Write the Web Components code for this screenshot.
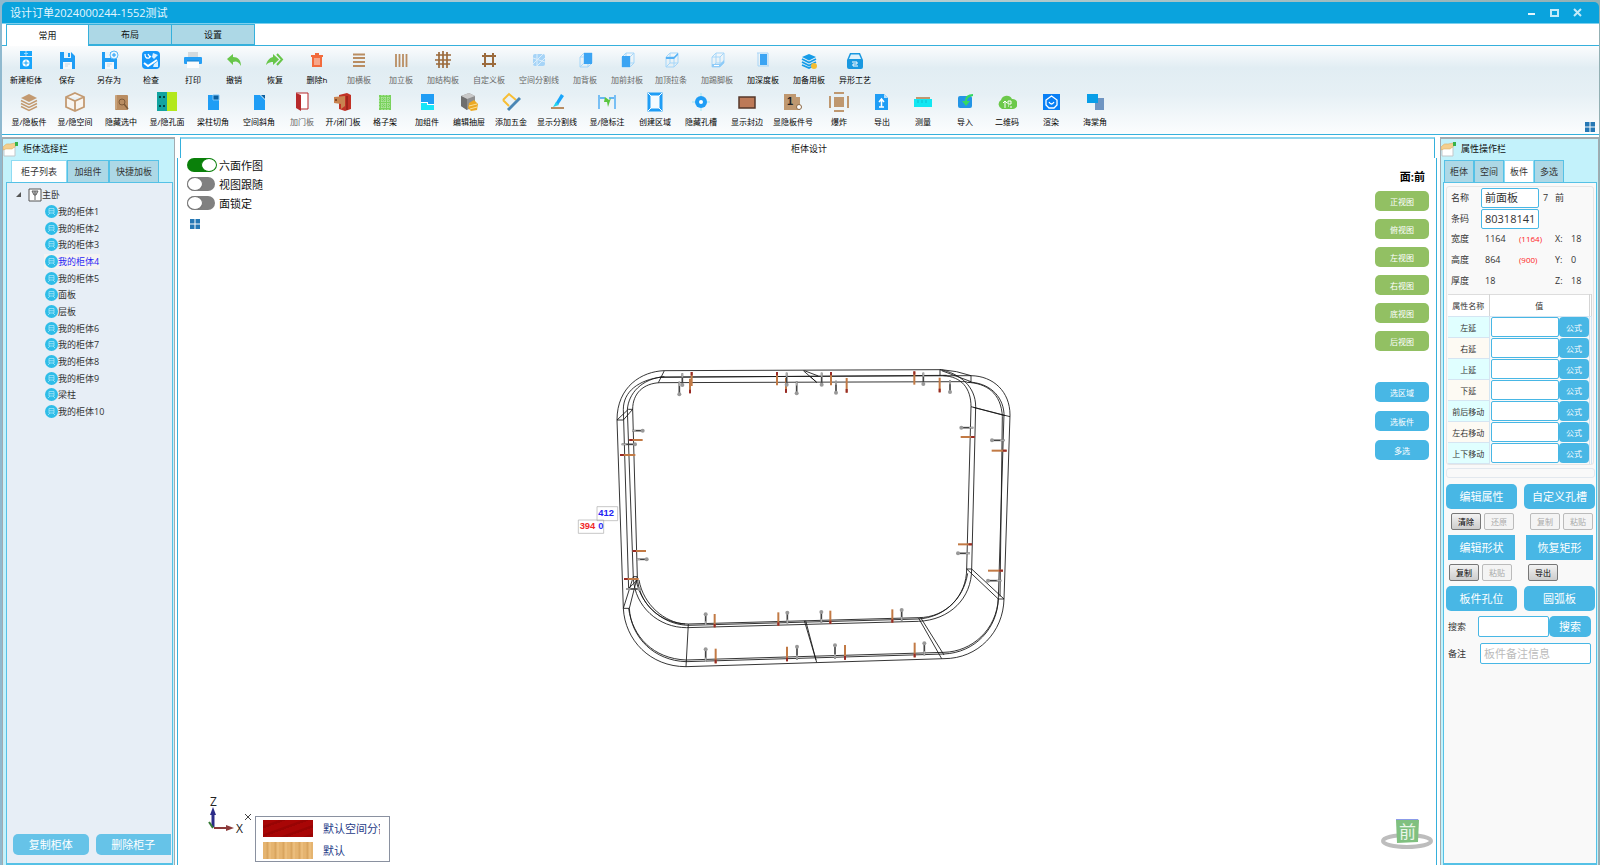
<!DOCTYPE html>
<html lang="zh-CN">
<head>
<meta charset="utf-8">
<title>设计订单2024000244-1552测试</title>
<style>
  html, body { margin: 0; height: 100%; }
  body { background: linear-gradient(90deg, #8fb9cf, #b9d3d6 50%, #93b0b4); font-family: "Open Sans", "Noto Sans CJK SC", sans-serif; font-size: 9px; color: #111; --line: #35b0dc; --btn: #48b7e5; }
</style>
</head>
<body>
<design-window></design-window>
<script>
const BASE = `*{box-sizing:border-box}button,input{font:inherit;color:inherit;margin:0}button{cursor:pointer;padding:0;border:0;background:none}svg{display:block}`;
const define = (name, css, html) => customElements.define(name, class extends HTMLElement {
  connectedCallback() {
    if (this.shadowRoot) return;
    const root = this.attachShadow({ mode: 'open' });
    root.innerHTML = `<style>${BASE}${css}</style>` + (typeof html === 'function' ? html(this) : html);
  }
});

const B = '#1f9df5', W = '#b98d62', box = '<path d="M5 7L9 3H17V13L13 17M5 7H13V17H5ZM13 7L17 3M9 3V13H17M9 13L5 17" fill="none" stroke="#a5d6f9"/>';
const ICONS = {
  cabinet: `<path d="M4 1H16V6H4ZM4 7H16V19H4Z" fill="#18a5fb"/><path d="M10 1V6M8 3.500H12" stroke="#9bdcff"/><circle cx="10" cy="13" r="3.500" fill="#fff"/><path d="M7.500 13H12.500M10 10.500V15.500" stroke="#18a5fb"/>`,
  save: `<path d="M3 2H14L18 6V19H3Z" fill="${B}"/><path d="M7 2H14V8H7Z" fill="#e8f4fb"/><path d="M11 3H13V7H11Z" fill="${B}"/><path d="M6 12H15V19H6Z" fill="#f3f8fc"/><path d="M8 14H13M8 16H11" stroke="#c8d8e4"/>`,
  saveas: `<path d="M3 2H14L18 6V19H3Z" fill="${B}"/><path d="M6 2H11V8H6Z" fill="#e8f4fb"/><path d="M6 12H15V19H6Z" fill="#f3f8fc"/><path d="M8 14H13M8 16H11" stroke="#c8d8e4"/><circle cx="15" cy="5" r="4" fill="#e9f6ff" stroke="#5bb8f7"/><path d="M13 5H17M15 3V7" stroke="${B}"/>`,
  check: `<rect x="1" y="1" width="18" height="18" rx="4" fill="#1697fa"/><path d="M4 4Q4 9 8 8L10 6M7 4L9 7" fill="none" stroke="#fff" stroke-width="1.300"/><path d="M3 13L7 16L16 10" fill="none" stroke="#fff" stroke-width="2"/><path d="M12 3L17 5L13 9L11 7ZM13 14L17 11V17H12Z" fill="#d9efff"/>`,
  print: `<path d="M5 2H15V7H5Z" fill="#d4dade"/><rect x="1" y="7" width="18" height="7" rx="1" fill="#269ff5"/><path d="M4 11H16V18H4Z" fill="#fafcfd"/><path d="M4 11H16" stroke="#137ec9"/>`,
  undo: `<path d="M3 9L9 4V7C14 7 17 10 17 16C14 11 12 11 9 12V15Z" fill="#68c64a"/>`,
  redo: `<path d="M14 9.500L8 4V7C4 8 2 11 1 15C4 12 6 12 8 12V15Z" fill="#68c64a"/><path d="M12 4L17 9.500L12 15" fill="none" stroke="#68c64a" stroke-width="2"/>`,
  trash: `<path d="M5 6H15V17H5ZM8 3H12V5H16V7H4V5H8Z" fill="#f26b3d"/><path d="M8 8V15M10 8V15M12 8V15" stroke="#fbe3da"/>`,
  hbars: `<path d="M4 4.500H16M4 8H16M4 12H16M4 16H16" stroke="${W}" stroke-width="1.800"/>`,
  vbars: `<path d="M5 4V17M8.500 4V17M12 4V17M15.500 4V17" stroke="${W}" stroke-width="1.800"/>`,
  fence: `<path d="M3 5H18M2 10H18M3 14H17M6 2V18M10 1V18M14 2V18" stroke="#9b6a3c" stroke-width="1.700" fill="none"/>`,
  hash: `<path d="M3 6H17M3 14H17M6 3V17M14 3V17" stroke="#9b6a3c" stroke-width="2"/>`,
  split: `<rect x="4" y="4" width="12" height="12" rx="2" fill="#a6d4f7"/><path d="M4 14L14 4M8 16L16 8M4 8L16 12M8 4V16" stroke="#dceefb"/>`,
  back: box + '<path d="M9 3H17V14H9Z" fill="#3ba4f3"/>',
  front: box + '<path d="M5 6H13V17H5Z" fill="#3ba4f3"/>',
  top: box + '<path d="M5 7H13L17 3V5L13 9H5Z" fill="#57b2f5"/>',
  kick: box + '<path d="M5 14H13L17 10V13L13 17H5Z" fill="#8fcbf7"/><path d="M7 15H12V16H7Z" fill="#fff"/>',
  depth: `<path d="M4 3H15M5 16H16M5 3V16M15 3V16" stroke="#a9d5f6"/><path d="M7 4H14V15H7Z" fill="#3ba4f3"/>`,
  spare: `<path d="M10 4L17 7L10 10.500L3 7Z" fill="#159ce8"/><path d="M3 9L10 12.500L17 9M3 12L10 15.500L17 12M3 15L10 18L16 15" fill="none" stroke="#159ce8" stroke-width="1.800"/><circle cx="15" cy="16" r="3" fill="#f4bd32"/>`,
  craft: `<path d="M2 10L5 3H15L18 10V17Q18 19 16 19H4Q2 19 2 17Z" fill="#1998e0"/><path d="M4 9L6 4.500H14L16 9Z" fill="#dff1fb"/><path d="M7 12H12V14H8V16H13" fill="none" stroke="#fff"/>`,
  layers: `<path d="M10 2L18 6L10 10L2 6Z" fill="#c39a71"/><path d="M2 8.500L10 12.500L18 8.500M2 11.500L10 15.500L18 11.500M2 14.500L10 18.500L18 14.500" fill="none" stroke="#c39a71" stroke-width="1.500"/>`,
  cube: `<path d="M10 1L19 5V15L10 19L1 15V5ZM1 5L10 9L19 5M10 9V19" fill="#f8f5f0" stroke="#c39a71" stroke-width="1.800"/>`,
  find: `<rect x="4" y="3" width="13" height="15" rx="1" fill="#b98d62"/><circle cx="11" cy="10" r="3" fill="none" stroke="#7e5a38"/><path d="M13 12L17 17" stroke="#7e5a38" stroke-width="1.500"/><path d="M5 3V17" stroke="#d8b996"/>`,
  holes: `<path d="M0 0H10V19H0Z" fill="#12a3a0"/><path d="M10 0H20V19H10Z" fill="#b3e81c"/><path d="M2 5H4M6 5H8M2 14H4M6 14H8" stroke="#044" stroke-width="2"/>`,
  notch: `<path d="M5 3H16V18H5Z" fill="#1f9df5"/><path d="M10 3H16V8H10Z" fill="#0b5f9e" stroke="#7cc6fa"/>`,
  bevel: `<path d="M5 3H11L16 8V18H5Z" fill="#1f9df5"/><path d="M12 3H16V7Z" fill="#0b5f9e"/>`,
  door: `<path d="M4 1H16V17H8" fill="#fff" stroke="#b7292b"/><path d="M4 1L9 3V19L4 16Z" fill="#b7292b"/>`,
  opendoor: `<path d="M6 3L14 1L18 3V17L12 19L6 17Z" fill="#c13226"/><path d="M1 5L12 4V14L8 17V12L1 11Z" fill="#c98350"/><path d="M14 4V18" stroke="#7d1913"/><circle cx="3" cy="8" r="1" fill="#6d3715"/>`,
  grid: `<path d="M4 3H16V18H4Z" fill="#79d25c"/><path d="M4 6H16M4 9H16M4 12H16M4 15H16M7 3V18M10 3V18M13 3V18" stroke="#c5edb9" stroke-dasharray="1 1"/>`,
  comp: `<path d="M4 2H17V12H11V10H4Z" fill="#1f9df5"/><path d="M4 11H10V13H17V18H4Z" fill="#18e5f7"/><path d="M4 10.500H10.500V12.500H17" stroke="#fff" fill="none"/>`,
  drawer: `<path d="M2 4L10 1L16 4V14L8 18L2 14Z" fill="#8f8f8f"/><path d="M2 4L8 7L16 4L10 1Z" fill="#c9c9c9"/><path d="M8 7V18L2 14V4Z" fill="#6e6e6e"/><path d="M10 11L15 8L19 12L18 18L12 19L9 16Z" fill="#eca924"/><path d="M10 14L18 12M11 17L18 15" stroke="#fbe096"/>`,
  hardware: `<path d="M2 8L8 2L15 8M2 8L8 14" fill="none" stroke="#f7be35" stroke-width="2"/><path d="M7 18L19 6" stroke="#4b87b5" stroke-width="3"/>`,
  cutline: `<path d="M8 12L14 2L17 4L11 13Z" fill="#18a5fb"/><path d="M6 15L9 10L12 13Z" fill="#22d4ec"/><path d="M4 16H17" stroke="#b98d62" stroke-width="2"/>`,
  dim: `<path d="M2 3V17M18 3V17M3 6H8M12 6H17" stroke="#3ba4f3" stroke-width="1.300"/><path d="M8 5L12 8L14 6L11 15L10 10L7 10Z" fill="#5ac640"/>`,
  area: `<path d="M4 2H16V18H4Z" fill="#f4fbff" stroke="#1f9df5" stroke-width="3"/><path d="M3 1L7 5M17 1L13 5M3 19L7 15M17 19L13 15" stroke="#fff"/>`,
  target: `<path d="M10 1V19M1 10H19" stroke="#9ce6f7"/><circle cx="10" cy="10" r="6" fill="#1f9df5"/><circle cx="10" cy="10" r="2" fill="#fff"/>`,
  edge: `<rect x="2" y="5" width="16" height="11" fill="#bd7a58" stroke="#55382b" stroke-width="1.500"/>`,
  number: `<path d="M1 2H13V5H17V18H1Z" fill="#bf9870"/><text x="4" y="13" font-family="Liberation Sans" font-size="11" font-weight="bold" fill="#222">1</text><circle cx="16" cy="15" r="2.500" fill="#fff" stroke="#8c6844"/>`,
  explode: `<path d="M5 5H15V15H5Z" fill="#bf9870"/><path d="M5 1H15M5 19H15M1 4V16M19 4V16" stroke="#bf9870" stroke-width="2"/>`,
  export: `<path d="M3 2H12L16 6V18H3Z" fill="#1f9df5"/><path d="M12 2V6H16Z" fill="#b9dffa"/><path d="M9.500 15V8M7 10L9.500 7L12 10M7 15H12" fill="none" stroke="#fff" stroke-width="1.500"/>`,
  measure: `<path d="M3 5H17V8H3Z" fill="#bf9870"/><path d="M1 7H19V15H1Z" fill="#12e7f2"/><path d="M5 8V11M9 8V11M13 8V11" stroke="#0aa6b8" stroke-width=".6"/>`,
  import: `<rect x="3" y="4" width="14" height="12" rx="2" fill="#2395e6"/><path d="M18 2Q10 2 10 9H7L11 14L15 9H12Q12 5 18 4Z" fill="#35d962"/>`,
  qr: `<path d="M5 17A5 5 0 0 1 4 8A6 6 0 0 1 15 7A5 5 0 0 1 16 17Z" fill="#6cc94b"/><path d="M8 16V9M6 11L8 9L10 11M11 9H14V12H11ZM11 14H12M14 14V16" stroke="#fff" fill="none"/>`,
  render: `<path d="M2 2H19V18H2Z" fill="#087ff5"/><path d="M10.500 4L16 8V13L13 16H8L5 13V8Z" fill="none" stroke="#fff" stroke-width="1.300"/><path d="M8 10Q10.500 14 13 10" stroke="#fff" fill="none" stroke-width="1.300"/>`,
  corner: `<path d="M10 6H19V18H10Z" fill="#6f95c2"/><path d="M2 2H13V11H2Z" fill="#089ee8"/>`
};

define('ribbon-tool', `:host{display:block;flex:none;width:42px}
:host([size="s"]){width:40px}:host([size="l"]){width:46px}:host([size="xl"]){width:50px}
button{width:100%;display:flex;flex-direction:column;align-items:center;gap:4px;white-space:nowrap}
svg{width:20px;height:20px}span{font-size:8px;line-height:12px;color:#000}:host([dim]) span{color:#666}`,
  el => `<button type="button"><svg viewBox="0 0 20 20" aria-hidden="true">${ICONS[el.getAttribute('icon')]}</svg><span><slot></slot></span></button>`);

const tool = ([icon, label, size = '', dim]) => `<ribbon-tool icon="${icon}" size="${size}"${dim ? ' dim' : ''}>${label}</ribbon-tool>`;
const ROW1 = [['cabinet','新建柜体','s'],['save','保存'],['saveas','另存为'],['check','检查'],['print','打印'],['undo','撤销','s'],['redo','恢复'],['trash','删除h'],['hbars','加横板','',1],['vbars','加立板','',1],['fence','加结构板','',1],['hash','自定义板','xl',1],['split','空间分割线','xl',1],['back','加背板','',1],['front','加前封板','',1],['top','加顶拉条','l',1],['kick','加踢脚板','l',1],['depth','加深度板','l'],['spare','加备用板','l'],['craft','异形工艺','l']];
const ROW2 = [['layers','显/隐板件','l'],['cube','显/隐空间','l'],['find','隐藏选中','l'],['holes','显/隐孔面','l'],['notch','梁柱切角','l'],['bevel','空间斜角','l'],['door','加门板','s',1],['opendoor','开/闭门板'],['grid','格子架'],['comp','加组件'],['drawer','编辑抽屉'],['hardware','添加五金'],['cutline','显示分割线','xl'],['dim','显/隐标注','xl'],['area','创建区域','l'],['target','隐藏孔槽','l'],['edge','显示封边','l'],['number','显隐板件号','l'],['explode','爆炸','l'],['export','导出','s'],['measure','测量'],['import','导入'],['qr','二维码'],['render','渲染','l'],['corner','海棠角']];
const FOUR = '<svg width="10" height="10" viewBox="0 0 10 10" aria-hidden="true"><path d="M0 0H4.500V4.500H0ZM5.500 0H10V4.500H5.500ZM0 5.500H4.500V10H0ZM5.500 5.500H10V10H5.500Z" fill="#2678b5"/></svg>';

define('title-bar', `:host{display:flex;justify-content:space-between;align-items:center;height:22px;padding:0 17px 0 8px;background:#0aa3dd;border-radius:5px 5px 0 0;border-bottom:1px solid #7cd0ee;color:#e4f6fd}
h1{margin:0;font-size:11px;font-weight:400;line-height:20px}nav{display:flex;gap:14px}nav button{width:9px;height:12px}`,
  `<h1>设计订单2024000244-1552测试</h1><nav>
  <button type="button" aria-label="最小化"><svg width="9" height="12" viewBox="0 0 9 12"><path d="M1 7H8" stroke="#e4f6fd" stroke-width="2"/></svg></button>
  <button type="button" aria-label="最大化"><svg width="9" height="12" viewBox="0 0 9 12"><path d="M1 3H8V9H1Z" fill="none" stroke="#c4ebf9" stroke-width="2"/></svg></button>
  <button type="button" aria-label="关闭"><svg width="9" height="12" viewBox="0 0 9 12"><path d="M1 2L8 9M8 2L1 9" stroke="#c4ebf9" stroke-width="2"/></svg></button></nav>`);

define('ribbon-bar', `:host{display:block;background:#fff}
.tabs{display:flex;padding:0 4px;height:22px;border-bottom:1px solid var(--line)}
.tabs button{height:21px;width:83px;border:1px solid var(--line);border-left-width:0;background:#add8e6;line-height:19px;font-size:9px}
.tabs button[aria-selected=true]{height:22px;background:#fff;border-left-width:1px;border-bottom:0}
.tools{position:relative;display:flex;flex-direction:column;gap:6px;height:89px;padding:4px;border-bottom:1px solid var(--line);background:linear-gradient(#fbfcfd,#e1edf3 25%,#e6f0f5 55%,#fcfdfe)}
.row{display:flex}.more{position:absolute;right:4px;bottom:2px}`,
  `<div class="tabs" role="tablist"><button role="tab" aria-selected="true">常用</button><button role="tab">布局</button><button role="tab">设置</button></div>
  <div class="tools"><div class="row">${ROW1.map(tool).join('')}</div><div class="row">${ROW2.map(tool).join('')}</div><button class="more" type="button" aria-label="更多">${FOUR}</button></div>`);

define('dock-panel', `:host{display:flex;flex-direction:column;border:1px solid #a3abb0;border-top-width:2px;background:#c3f2fb;min-height:0}
header{display:flex;align-items:center;gap:4px;height:20px;line-height:20px}header svg{width:16px;height:16px}
.tabs{display:flex;align-items:flex-end;height:23px;padding-left:var(--tab-indent,2px)}
.body{flex:1;display:flex;flex-direction:column;min-height:0;margin:0 1px 0 var(--body-indent,2px);border:1px solid #55c1e6;border-bottom-width:2px;background:var(--body-bg,#e7eef6)}`,
  el => `<header><svg viewBox="0 0 16 16" aria-hidden="true"><path d="M1 6H12V15H1Z" fill="#fff" stroke="#c3c7ca"/><path d="M1 5Q3 2 7 3L12 2L13 5L9 8L3 8L0 9V6Z" fill="#f4cf8e" stroke="#dba85b" stroke-width=".5"/><path d="M12 1H15V5H12Z" fill="#37b34a"/></svg><span>${el.getAttribute('heading')}</span></header><div class="tabs" role="tablist"><slot name="tab"></slot></div><div class="body"><slot></slot></div>`);

define('panel-tab', `:host{display:block;height:22px}button{height:22px;width:100%;border:1px solid #55c1e6;border-bottom:0;background:#add8e6;line-height:20px;font-size:9px;white-space:nowrap;color:#333}
:host([active]) button{background:#fff;border-color:#8edbf3}`, `<button type="button" role="tab"><slot></slot></button>`);

define('cabinet-tree', `:host{display:flex;flex-direction:column;flex:1;padding:3px 0 8px}
.root{display:flex;align-items:center;height:17px;padding-left:8px;color:#333}.root svg{flex:none}.fold{margin-right:6px}
ul{list-style:none;margin:0;padding:0 0 0 37px;height:217px;display:grid;grid-template-rows:repeat(13,1fr)}
li{display:flex;align-items:center}li a{display:flex;align-items:center;line-height:15px;padding:0 1px;color:#333;text-decoration:none}li svg{width:13px;height:13px}
li a[aria-current]{color:#2b1ff5;background:#f4f3f2}
.acts{margin-top:auto;display:flex;gap:7px;padding:0 1px 0 6px}.acts button{flex:1;height:21px;border-radius:5px;background:#66c3e8;color:#fff;font-size:11px;line-height:20px}.acts button:last-child{border-radius:5px 0 0 5px}`,
  `<div class="root"><svg class="fold" width="7" height="7" viewBox="0 0 7 7" aria-hidden="true"><path d="M1 6L6 1V6Z" fill="#555"/></svg><svg width="14" height="14" viewBox="0 0 14 14" aria-hidden="true"><path d="M1 1H13V13H1Z" fill="#fff" stroke="#555"/><path d="M4 3H10L8 7H6ZM7 3V12" fill="#bbb" stroke="#666"/></svg>主卧</div>
  <ul>${['我的柜体1','我的柜体2','我的柜体3','我的柜体4','我的柜体5','面板','层板','我的柜体6','我的柜体7','我的柜体8','我的柜体9','梁柱','我的柜体10'].map(t => `<li><a href="#"${t === '我的柜体4' ? ' aria-current="true"' : ''}><svg viewBox="0 0 13 13" aria-hidden="true"><circle cx="6.500" cy="6.500" r="6.500" fill="#2fbde8"/><path d="M4 3.500H9V8H4ZM4 5.700H9M3 10L5 8M10 10L8 8" fill="none" stroke="#a5e4f7" stroke-width=".8"/></svg>${t}</a></li>`).join('')}</ul>
  <div class="acts"><button type="button">复制柜体</button><button type="button">删除柜子</button></div>`);

define('toggle-switch', `:host{display:block}label{display:flex;align-items:center;gap:4px;height:19px;font-size:11px;color:#111}
input{appearance:none;width:28px;height:14px;border-radius:7px;background:#808080;position:relative}
input::before{content:"";position:absolute;inset:0 auto 0 0;width:14px;border-radius:50%;background:#fff;border:1px solid #777}
input:checked{background:#0a800a}input:checked::before{left:14px;border-color:#0a800a}`,
  el => `<label><input type="checkbox"${el.hasAttribute('on') ? ' checked' : ''}><span>${el.textContent}</span></label>`);

// Dowels (red tip) and screws (round head): x, y, dx, dy in drawing units.
const DOWELS = [[365,66,0,42],[360,130,0,-44],[621,66,0,40],[648,128,0,-44],[783,66,0,40],[830,128,0,-44],[1033,64,0,40],[1109,127,0,-44],[434,832,0,-40],[625,827,0,-40],[781,822,0,-40],[967,818,0,-40],[437,940,0,-44],[651,934,0,-44],[825,929,0,-44],[1034,922,0,-44],[178,270,40,0],[150,315,46,0],[188,603,40,0],[162,687,44,0],[1214,261,-42,0],[1310,302,-45,0],[1206,583,-42,0],[1299,662,-45,0]];
const SCREWS = [[337,70,0,35],[328,95,0,38],[650,68,0,36],[680,94,0,36],[755,68,0,36],[798,92,0,36],[1060,68,0,34],[1140,90,0,36],[407,825,0,-32],[652,820,0,-32],[754,818,0,-32],[995,812,0,-32],[407,936,0,-38],[681,930,0,-40],[795,926,0,-40],[1063,916,0,-36],[186,242,32,0],[155,283,40,0],[200,628,30,0],[168,717,40,0],[1210,233,-36,0],[1304,271,-38,0],[1200,610,-36,0],[1294,692,-40,0]];

define('cabinet-scene', `:host{display:block;width:460px}svg{width:100%;height:auto}text{font:bold 28px "Liberation Sans",sans-serif}`,
  `<svg viewBox="0 0 1380 1020" role="img" aria-label="柜体">
  <g fill="none" stroke="#161616" stroke-width="2.600">
  <path d="M283 62L1115 59Q1160 62 1203 77C1270 78 1320 125 1320 195L1302 747C1300 845 1225 926 1122 926L348 950C240 950 165 870 160 775L141 210C141 110 215 64 283 62Z"/>
  <path d="M270 98L1190 95M275 81L1203 77M270 82L1130 76"/>
  <path d="M270 98C220 100 188 130 188 178L202 680C205 760 270 822 355 822L1045 803C1130 803 1190 735 1190 657L1203 170C1203 115 1175 80 1120 77"/>
  <path d="M275 81C205 90 160 125 160 178L176 720M283 80C215 86 175 130 172 180L190 685C195 770 265 833 350 833L1045 814C1140 810 1205 745 1205 657L1217 170C1217 110 1170 70 1110 59"/>
  <path d="M198 690C215 770 280 824 355 826L1045 807C1120 802 1180 750 1193 670M207 690C220 765 285 818 345 822"/>
  <path d="M178 775C183 865 255 932 348 935L1122 912C1215 908 1283 835 1285 745L1302 190C1298 135 1255 98 1195 96"/>
  <path d="M176 775C187 860 250 926 348 930L1122 907C1205 905 1280 840 1285 745M1290 740L1297 200C1294 130 1250 99 1190 97"/>
  <path d="M283 62L265 98M700 62L740 97L720 79M703 62L745 78M141 210L175 178H188L160 210ZM1110 59V76M1115 62L1203 95M1203 77V96M1203 170L1320 200M1210 172L1305 197M1190 657H1205L1302 747H1285ZM1045 803L1115 926M1052 803L1122 915M703 812L740 937M707 812L738 930M355 822L348 950M160 775L190 680H202L178 775ZM176 715L202 690"/>
  </g>
  ${DOWELS.map(([x, y, a, b]) => `<path d="M${x} ${y}l${a} ${b}" stroke="#c27a45" stroke-width="6"/><path d="M${x} ${y}l${a * .25} ${b * .25}" stroke="#982a26" stroke-width="6"/>`).join('')}
  ${SCREWS.map(([x, y, a, b]) => `<path d="M${x} ${y}l${a} ${b}" stroke="#444" stroke-width="5"/><path d="M${x} ${y}l${a * .35} ${b * .35}" stroke="#aaa" stroke-width="5"/><circle cx="${x + a}" cy="${y + b}" r="6" fill="#999"/>`).join('')}
  <path d="M81 470H143V512H81ZM25 510H101V550H25Z" fill="#fff" stroke="#aaa" stroke-width="2"/>
  <text x="85" y="498" fill="#2222f4">412</text><text x="29" y="538" fill="#f02a2a">394</text><text x="85" y="538" fill="#3333f4">0</text></svg>`);

define('design-view', `:host{display:flex;flex-direction:column;min-width:0;margin-right:1px}
h2{margin:0 2px 0 3px;padding-left:3px;height:21px;border:1px solid var(--line);border-top:2px solid #8fd5ee;border-bottom:0;background:#fff;text-align:center;font-size:9px;font-weight:400;line-height:20px}
.view{position:relative;flex:1;display:flex;align-items:center;justify-content:center;padding:16px 14px 0 0;background:#fff;border:1px solid var(--line);border-top:0;overflow:hidden}
.tl{position:absolute;left:9px;top:-3px}.tl svg{margin:7px 0 0 3px}
.tr{position:absolute;right:7px;top:13px;width:54px;display:flex;flex-direction:column;gap:8px}
.tr p{margin:0 4px;text-align:right;font:bold 11px/12px "Open Sans","Noto Sans CJK SC",sans-serif;color:#000}
.tr button{height:20px;border-radius:5px;background:#92c063;color:#fff;font-size:8px;line-height:19px}
.tr .b{background:var(--btn);margin-top:1px}.tr .b.first{margin-top:23px}
.bl{position:absolute;left:23px;bottom:4px;display:flex;align-items:flex-end}.ax{margin-bottom:2px}
.legend{border:1px solid #8a91a0;padding:2px 7px;width:135px;display:flex;flex-direction:column;gap:4px;color:#1f3c88;font-size:11px;line-height:17px;background:#fff}
.legend div{display:flex;gap:10px;height:18px;align-items:center}.legend i{width:50px;height:17px;background:repeating-linear-gradient(160deg,#a80606 0 5px,#980404 6px 8px)}.legend i.w{background:repeating-linear-gradient(90deg,#e5b470 0 3px,#d9a55f 4px 5px,#ebbd7c 6px 8px)}.legend span{width:57px;overflow:hidden;white-space:nowrap}
.cube{position:absolute;right:2px;bottom:15px}.ax text{font:12px "Open Sans",sans-serif;fill:#222}.cube text{font:17px "Noto Sans CJK SC",sans-serif;fill:#e9f6e9}`,
  `<h2>柜体设计</h2><div class="view"><cabinet-scene></cabinet-scene>
  <div class="tl"><toggle-switch on>六面作图</toggle-switch><toggle-switch>视图跟随</toggle-switch><toggle-switch>面锁定</toggle-switch>${FOUR}</div>
  <div class="tr"><p>面:前</p>${['正视图','俯视图','左视图','右视图','底视图','后视图'].map(t => `<button type="button">${t}</button>`).join('')}<button type="button" class="b first">选区域</button><button type="button" class="b">选板件</button><button type="button" class="b">多选</button></div>
  <div class="bl"><svg class="ax" width="54" height="66" viewBox="0 0 54 66"><text x="9" y="12">Z</text><path d="M12 33V20" stroke="#2c2c88" stroke-width="3"/><path d="M9 21L12 13L15 21Z" fill="#2c2c88"/><path d="M13 34H27" stroke="#8c3a3a" stroke-width="2"/><path d="M25 31L33 34L25 37Z" fill="#8c3a3a"/><path d="M8 28L12 34" stroke="#357a35" stroke-width="2"/><text x="35" y="39">X</text><path d="M44 20L50 26M50 20L44 26" stroke="#444"/></svg>
  <div class="legend"><div><i></i><span>默认空间分割</span></div><div><i class="w"></i><span>默认</span></div></div></div>
  <svg class="cube" width="54" height="34" viewBox="0 0 54 34"><ellipse cx="27" cy="24" rx="24" ry="6" fill="none" stroke="#bdbdbd" stroke-width="4"/><path d="M16 2L38 2L39 4H16Z" fill="#8b9be8"/><path d="M16 3H39L38 25L17 26Z" fill="#80c080"/><text x="19" y="21">前</text></svg></div>`);

const small = (t, off) => `<button type="button" class="sm"${off ? ' disabled' : ''}>${t}</button>`;
define('board-props', `:host{display:block;padding:3px 1px 0;color:#333}
.card{border:1px solid #e6e6e6;border-radius:3px;margin:0 1px;padding:1px 1px 0}
.f{display:grid;grid-template-columns:30px 38px 20px 16px 16px 1fr;grid-template-rows:repeat(5,1fr);align-items:center;margin:0 0 3px 3px;line-height:20px;height:103px}
.f label,.f span{padding-right:2px;white-space:nowrap}.f .v{padding-left:4px}.f .r{grid-column:3/5;font-size:8px;color:#f22}.f .in{grid-column:2/4}
input{width:100%;min-width:0;border:1px solid #48b7e5;border-radius:2px;background:#fff;font-size:11px;padding:0 3px;height:20px;outline:0}
input::placeholder{color:#bbb;opacity:1}
table{border-collapse:collapse;width:100%;table-layout:fixed;font-size:8px}
.c1{width:41px}.c3{width:2px}
th{font-weight:400;padding:0;border-bottom:1px solid #d5e5f2;text-align:center}thead th{height:22px;background:#fff;border-right:1px solid #d5d5d5;border-top:1px solid #ddd}
tbody th{background:#fdfaf3;border-right:1px solid #d5e5f2}tbody tr:nth-child(odd) th{background:#e0ffff}tbody td{padding:0;height:21px;border-right:1px solid #d5e5f2}
td div{display:flex;padding-left:1px}td input{flex:1}td button{flex:none;width:30px;height:20px;border-radius:4px;background:var(--btn);color:#fff;font-size:8px;line-height:19px}
.bar{height:10px;margin:3px 0 6px 1px;border:1px solid #e2e8ee;border-radius:3px}
.big{display:grid;grid-template-columns:71px 71px;justify-content:space-between;height:25px;margin-left:1px}.big button{border-radius:5px;background:var(--btn);color:#fff;font-size:11px;line-height:24px;white-space:nowrap}
.big.sq button{border-radius:0;margin:0 2px}
.sr{display:grid;grid-template-columns:30px 30px 10px 30px 30px;column-gap:3px;height:17px;margin:4px 0 5px 6px}.sr :nth-child(n+3){grid-column-start:4}.sr :nth-child(4){grid-column-start:5}
.sr.tight{margin-left:4px}
.sm{border:1px solid #777;border-radius:2px;background:linear-gradient(#f3f3f3,#ddd 55%,#cdcdcd);color:#000;font-size:8px;line-height:14px}.sm:disabled{background:#f4f4f4;border-color:#bbb;color:#aaa}
.q{display:grid;grid-template-columns:30px 71px 42px;align-items:center;margin:5px 0 0 3px}.q button{height:21px;border-radius:5px;background:var(--btn);color:#fff;font-size:11px;line-height:20px}.q input{height:21px}.q.n{grid-template-columns:32px 111px;margin-top:6px}`,
  `<div class="card"><div class="f">
  <label for="nm">名称</label><input id="nm" class="in" value="前面板"><span class="v">7</span><span>前</span><span></span>
  <label for="bc">条码</label><input id="bc" class="in" value="80318141"><span></span><span></span><span></span>
  <span>宽度</span><span class="v">1164</span><span class="r">(1164)</span><span>X:</span><span>18</span>
  <span>高度</span><span class="v">864</span><span class="r">(900)</span><span>Y:</span><span>0</span>
  <span>厚度</span><span class="v">18</span><span class="r"></span><span>Z:</span><span>18</span></div>
  <table><colgroup><col class="c1"><col><col class="c3"></colgroup><thead><tr><th>属性名称</th><th>值</th><th></th></tr></thead><tbody>${['左延','右延','上延','下延','前后移动','左右移动','上下移动'].map((t, i) => `<tr><th scope="row"><label for="p${i}">${t}</label></th><td><div><input id="p${i}"><button type="button">公式</button></div></td><td></td></tr>`).join('')}</tbody></table></div>
  <div class="bar"></div>
  <div class="big"><button type="button">编辑属性</button><button type="button">自定义孔槽</button></div>
  <div class="sr">${small('清除')}${small('还原', 1)}${small('复制', 1)}${small('粘贴', 1)}</div>
  <div class="big sq"><button type="button">编辑形状</button><button type="button">恢复矩形</button></div>
  <div class="sr tight">${small('复制')}${small('粘贴', 1)}${small('导出')}</div>
  <div class="big"><button type="button">板件孔位</button><button type="button">圆弧板</button></div>
  <div class="q"><label for="s">搜索</label><input id="s"><button type="button">搜索</button></div>
  <div class="q n"><label for="n">备注</label><input id="n" placeholder="板件备注信息"></div>`);

define('design-window', `:host{display:flex;flex-direction:column;min-height:100vh;padding:2px 1px 0 2px}
main{flex:1;display:grid;grid-template-columns:173px minmax(0,1fr) 159px;gap:2px;padding-top:2px;background:#fff}
.l{--tab-indent:8px;--body-indent:3px}.r{--body-bg:#f9f9f9;--tab-indent:3px}.l,.r{margin-bottom:1px}.a{width:56px}.b{width:42px}.c{width:50px}.d{width:30px}`,
  `<title-bar></title-bar><ribbon-bar></ribbon-bar><main>
  <dock-panel class="l" heading="柜体选择栏"><panel-tab slot="tab" class="a" active>柜子列表</panel-tab><panel-tab slot="tab" class="b">加组件</panel-tab><panel-tab slot="tab" class="c">快捷加板</panel-tab><cabinet-tree></cabinet-tree></dock-panel>
  <design-view></design-view>
  <dock-panel class="r" heading="属性操作栏"><panel-tab slot="tab" class="d">柜体</panel-tab><panel-tab slot="tab" class="d">空间</panel-tab><panel-tab slot="tab" class="d" active>板件</panel-tab><panel-tab slot="tab" class="d">多选</panel-tab><board-props></board-props></dock-panel></main>`);
</script>
</body>
</html>
